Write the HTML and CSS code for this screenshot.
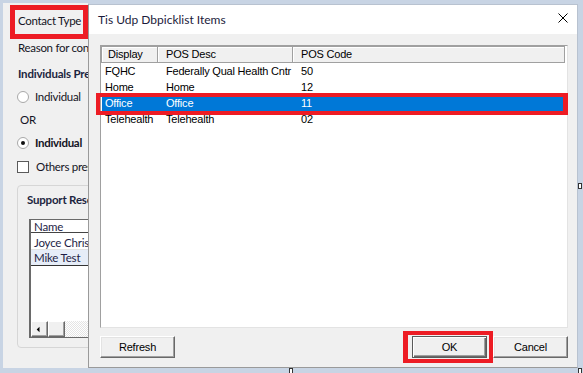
FILE: index.html
```html
<!DOCTYPE html>
<html>
<head>
<meta charset="utf-8">
<link rel="stylesheet" href="styles.css">
</head>
<body>
<div class="screen">
  <div class="form">
    <div class="line">Contact Type</div>
    <div class="line l-reason">Reason for cont</div>
    <div class="line bold l-ind">Individuals Pre</div>
    <div class="line opt l-opt1"><span class="radio"></span>Individual</div>
    <div class="line l-or">OR</div>
    <div class="line opt l-opt2"><span class="radio on"></span><span class="semi">Individual</span></div>
    <div class="line opt chk l-chk"><span class="check"></span>Others pres</div>
    <div class="group">
      <div class="line bold group-title">Support Reso</div>
      <div class="grid">
        <div class="g-head">Name</div>
        <div class="g-row">Joyce Christ</div>
        <div class="g-row g-sel">Mike Test</div>
        <div class="g-fill"></div>
        <div class="g-scroll">
          <span class="sb-btn"><svg width="16" height="15" viewBox="0 0 16 15"><path d="M5 7.5L8 4.5V10.5Z" fill="#000"/></svg></span>
          <span class="sb-btn"></span>
          <span class="sb-track"></span>
        </div>
      </div>
    </div>
  </div>
</div>

<div class="hl hl-contact"></div>

<div class="dialog">
  <div class="titlebar">
    <span class="title">Tis Udp Dbpicklist Items</span>
    <svg class="close" width="10" height="10" viewBox="0 0 10 10"><path d="M0.5 0.5L9.5 9.5M9.5 0.5L0.5 9.5" stroke="#000" stroke-width="1"/></svg>
  </div>
  <div class="dbody">
    <div class="list">
      <div class="lhead"><span>Display</span><span>POS Desc</span><span>POS Code</span></div>
      <div class="lrow"><span>FQHC</span><span>Federally Qual Health Cntr</span><span>50</span></div>
      <div class="lrow"><span>Home</span><span>Home</span><span>12</span></div>
      <div class="lrow sel"><span>Office</span><span>Office</span><span>11</span></div>
      <div class="lrow"><span>Telehealth</span><span>Telehealth</span><span>02</span></div>
    </div>
    <div class="buttons">
      <button class="btn">Refresh</button>
      <button class="btn ok">OK</button>
      <button class="btn">Cancel</button>
    </div>
  </div>
</div>

<div class="hl hl-row"></div>
<div class="hl hl-ok"></div>

<div class="handle h-right"></div>
<div class="handle h-bottom"></div>
<div class="handle h-corner"></div>
</body>
</html>
```

FILE: styles.css
```css
html, body {
  margin: 0;
  padding: 0;
}
body {
  width: 583px;
  height: 373px;
  overflow: hidden;
  position: relative;
  background: #c8d4e4;
  font-family: Lato, "Noto Sans", sans-serif;
}
.screen {
  padding: 3px 0 0 3px;
}
.form {
  width: 85px;
  height: 365px;
  box-sizing: border-box;
  background: #f0f0f0;
  padding: 10px 0 0 15px;
  display: flex;
  flex-direction: column;
  overflow: hidden;
}
.line {
  height: 16px;
  line-height: 16px;
  white-space: nowrap;
  overflow: hidden;
  font-size: 11.5px;
  letter-spacing: -0.3px;
  color: #141424;
}
.bold { font-weight: 700; color: #1c2540; letter-spacing: -0.2px; }
.semi { font-weight: 700; }
.l-reason { margin-top: 11px; }
.l-ind { margin-top: 10px; }
.l-opt1 { margin-top: 7px; }
.l-or { margin-top: 7px; margin-left: 2px; }
.l-opt2 { margin-top: 7px; }
.l-chk { margin-top: 8px; }
.opt {
  display: flex;
  align-items: center;
  gap: 6px;
  margin-left: -1px;
}
.chk { gap: 7px; }
.radio {
  width: 12px;
  height: 12px;
  box-sizing: border-box;
  border: 1px solid #a8a8a8;
  border-radius: 50%;
  background: #fff;
  display: flex;
  align-items: center;
  justify-content: center;
  flex: none;
}
.radio.on::after {
  content: "";
  width: 4px;
  height: 4px;
  border-radius: 50%;
  background: #111;
}
.check {
  width: 12px;
  height: 12px;
  box-sizing: border-box;
  border: 1px solid #5a5a5a;
  background: #fff;
  flex: none;
}
.group {
  margin-top: 10px;
  margin-left: -1px;
  width: 220px;
  height: 163px;
  box-sizing: border-box;
  border: 1px solid #d6d6d6;
  border-radius: 4px;
  padding: 6px 0 0 9px;
  flex: none;
}
.group-title { width: 62px; }
.grid {
  margin-top: 11px;
  margin-left: 2px;
  width: 170px;
  height: 119px;
  box-sizing: border-box;
  border: 1px solid #6a6a6a;
  border-left-width: 2px;
  background: #fff;
  display: flex;
  flex-direction: column;
  font-size: 11.5px;
  letter-spacing: -0.2px;
  color: #1e1e46;
}
.g-head {
  height: 12px;
  line-height: 14px;
  padding-left: 3px;
  border-bottom: 1px solid #444;
  white-space: nowrap;
  overflow: hidden;
}
.g-row {
  height: 16px;
  line-height: 19px;
  padding-left: 3px;
  border-bottom: 1px solid #e2e2e2;
  white-space: nowrap;
  overflow: hidden;
}
.g-sel {
  height: 15px;
  line-height: 16px;
  background: #e6edf8;
  border-bottom: 1px solid #333;
}
.g-fill { flex: 1; }
.g-scroll {
  height: 16px;
  display: flex;
}
.sb-btn {
  width: 17px;
  height: 16px;
  box-sizing: border-box;
  background: #f0f0f0;
  border: 1px solid;
  border-color: #fff #696969 #696969 #fff;
  box-shadow: inset -1px -1px #a0a0a0;
  display: flex;
}
.sb-track {
  flex: 1;
  background: repeating-conic-gradient(#ffffff 0 25%, #e4e4e4 0 50%) 0 0 / 2px 2px;
}

/* red highlights */
.hl {
  position: absolute;
  box-sizing: border-box;
  border: 4px solid #ed1c24;
}
.hl-contact {
  left: 10px;
  top: 5px;
  width: 78px;
  height: 34px;
  border-width: 5px;
}
.hl-row {
  left: 96px;
  top: 93px;
  width: 472px;
  height: 22px;
  border-right-width: 5px;
}
.hl-ok {
  left: 403px;
  top: 331px;
  width: 90px;
  height: 32px;
  border-left-width: 5px;
}

/* dialog */
.dialog {
  position: absolute;
  left: 88px;
  top: 4px;
  width: 490px;
  height: 364px;
  box-sizing: border-box;
  border: 1px solid #9a9a9a;
  border-top-color: #b8c2d0;
  border-right-color: #b8c2d0;
  background: #f0f0f0;
  display: flex;
  flex-direction: column;
}
.titlebar {
  height: 29px;
  flex: none;
  background: #fff;
  display: flex;
  align-items: center;
  justify-content: space-between;
  padding: 0 9px;
}
.title {
  font-family: Lato, "Noto Sans", sans-serif;
  font-size: 12px;
  color: #1b1b3b;
}
.close { margin-top: -3px; }
.dbody {
  flex: 1;
  padding: 11px 9px 0 11px;
  display: flex;
  flex-direction: column;
  font-family: "Liberation Sans", Arial, sans-serif;
  font-size: 11px;
  letter-spacing: -0.2px;
}
.list {
  height: 283px;
  box-sizing: border-box;
  border: 1px solid;
  border-color: #a0a0a0 #e3e3e3 #e3e3e3 #a0a0a0;
  background: #fff;
  color: #000;
}
.lhead {
  display: grid;
  grid-template-columns: 57px 135px 272px;
  height: 17px;
}
.lhead span {
  box-sizing: border-box;
  border: 1px solid #a0a0a0;
  box-shadow: inset 1px 1px #fff;
  background: #f0f0f0;
  line-height: 15px;
  padding-left: 8px;
  white-space: nowrap;
}
.lhead span:first-child { padding-left: 6px; }
.lhead span + span { border-left: none; }
.lrow {
  display: grid;
  grid-template-columns: 57px 135px 1fr;
  height: 16px;
  line-height: 16px;
  white-space: nowrap;
}
.lrow span { padding-left: 8px; }
.lrow span:first-child { padding-left: 4px; }
.lrow.sel {
  background: #0078d7;
  color: #fff;
  box-shadow: inset 1px 0 #fff;
}
.buttons {
  display: flex;
  gap: 6px;
  margin-top: 8px;
}
.btn {
  width: 75px;
  height: 22px;
  box-sizing: border-box;
  padding: 0;
  margin: 0;
  background: #f0f0f0;
  border: 1px solid;
  border-color: #fff #696969 #696969 #fff;
  box-shadow: inset -1px -1px #a0a0a0, inset 1px 1px #e3e3e3;
  font-family: "Liberation Sans", Arial, sans-serif;
  font-size: 11px;
  letter-spacing: -0.2px;
  color: #000;
}
.btn.ok {
  margin-left: auto;
  border-color: #5a5a5a;
  box-shadow: inset 1px 1px #fff, inset -1px -1px #696969, inset -2px -2px #a0a0a0;
}

/* sizing handles */
.handle {
  position: absolute;
  width: 4px;
  height: 6px;
  box-sizing: border-box;
  background: #fff;
  border: 1px solid #333;
}
.h-right { left: 578px; top: 183px; }
.h-bottom { left: 289px; top: 368px; }
.h-corner { left: 578px; top: 368px; }
```
